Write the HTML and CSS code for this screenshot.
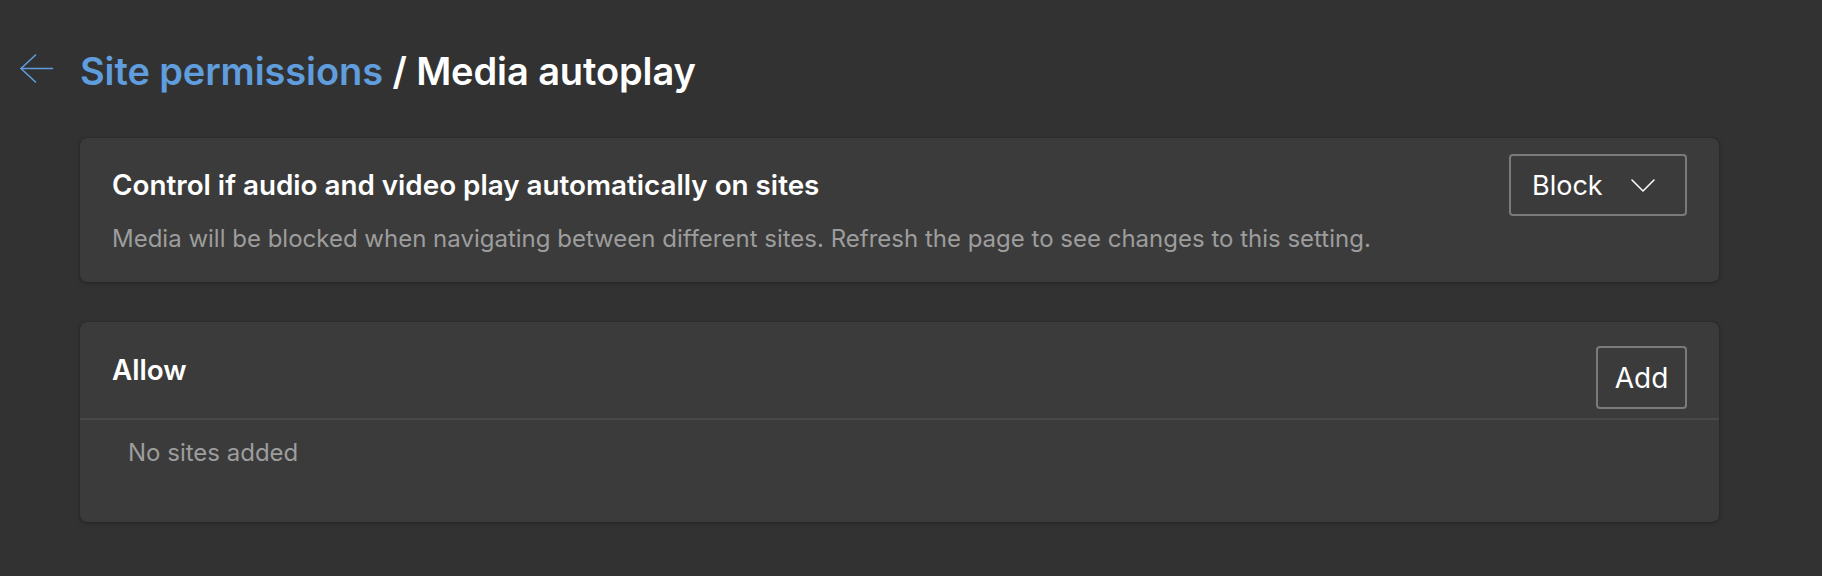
FILE: index.html
```html
<!DOCTYPE html>
<html lang="en">
<head>
<meta charset="utf-8">
<title>Media autoplay</title>
<link rel="stylesheet" href="styles.css">
</head>
<body>
<main class="page">
  <button class="back" aria-label="Back">
    <svg width="34" height="30" viewBox="0 0 34 30" fill="none" stroke="currentColor" stroke-width="1.6" stroke-linecap="round" stroke-linejoin="round">
      <path d="M1 14.5 H32.5"/>
      <path d="M15.5 1 L1 14.5 L15.5 28"/>
    </svg>
  </button>
  <div class="content">
    <h1 class="title"><span class="crumb">Site permissions</span> / Media autoplay</h1>

    <section class="card setting">
      <div class="setting-row">
        <h2 class="card-heading">Control if audio and video play automatically on sites</h2>
        <button class="dropdown">
          <span>Block</span>
          <svg width="24" height="13" viewBox="0 0 24 13" fill="none" stroke="currentColor" stroke-width="1.5" stroke-linecap="round" stroke-linejoin="round">
            <path d="M1 1 L12 12 L23 1"/>
          </svg>
        </button>
      </div>
      <p class="desc">Media will be blocked when navigating between different sites. Refresh the page to see changes to this setting.</p>
    </section>

    <section class="card list">
      <div class="list-head">
        <h2 class="card-heading allow">Allow</h2>
        <button class="btn">Add</button>
      </div>
      <div class="list-body">
        <p class="empty">No sites added</p>
      </div>
    </section>
  </div>
</main>
</body>
</html>
```

FILE: styles.css
```css
html, body {
  margin: 0;
  padding: 0;
  background: #323232;
}

body {
  font-family: Inter, "Noto Sans", "Liberation Sans", sans-serif;
  color: #ffffff;
}

.page {
  display: grid;
  grid-template-columns: 60px 1639px;
  padding: 48px 103px 40px 20px;
}

.back {
  align-self: start;
  margin-top: 6px;
  padding: 0;
  border: 0;
  background: none;
  color: #5f9ddd;
  width: 34px;
  height: 30px;
  display: block;
}

.back svg {
  display: block;
}

.content {
  display: flex;
  flex-direction: column;
}

.title {
  margin: 0 0 44px 0;
  font-size: 38px;
  line-height: 46px;
  font-weight: 600;
  letter-spacing: -0.1px;
  color: #ffffff;
}

.crumb {
  color: #5f9ddd;
}

.card {
  background: #3b3b3b;
  border-radius: 7px;
  box-shadow: 0 1px 4px rgba(0, 0, 0, 0.28), 0 0 1px rgba(0, 0, 0, 0.3);
}

.setting {
  padding: 16px 32px 28px 32px;
}

.setting-row {
  display: flex;
  align-items: center;
  justify-content: space-between;
}

.card-heading {
  margin: 0;
  font-size: 27.8px;
  line-height: 34px;
  font-weight: 600;
  color: #ffffff;
}

.dropdown {
  width: 178px;
  height: 62px;
  box-sizing: border-box;
  border: 2px solid #7a7a7a;
  border-radius: 4px;
  background: transparent;
  color: #ffffff;
  font-family: inherit;
  font-size: 27px;
  display: flex;
  align-items: center;
  justify-content: space-between;
  padding: 1px 30px 0 21px;
}

.dropdown svg {
  display: block;
}

.desc {
  margin: 8px 0 0 0;
  font-size: 24px;
  line-height: 30px;
  color: #9d9d9d;
}

.list {
  margin-top: 40px;
}

.list-head {
  display: flex;
  align-items: flex-start;
  justify-content: space-between;
  padding: 24px 32px 9px 32px;
  border-bottom: 2px solid #494949;
}

.allow {
  margin-top: 7px;
}

.btn {
  width: 91px;
  height: 63px;
  box-sizing: border-box;
  border: 2px solid #7a7a7a;
  border-radius: 4px;
  background: transparent;
  color: #ffffff;
  font-family: inherit;
  font-size: 28px;
  padding: 0;
}

.list-body {
  padding: 18px 32px 54px 48px;
}

.empty {
  margin: 0;
  font-size: 24px;
  line-height: 30px;
  color: #9d9d9d;
}
```
